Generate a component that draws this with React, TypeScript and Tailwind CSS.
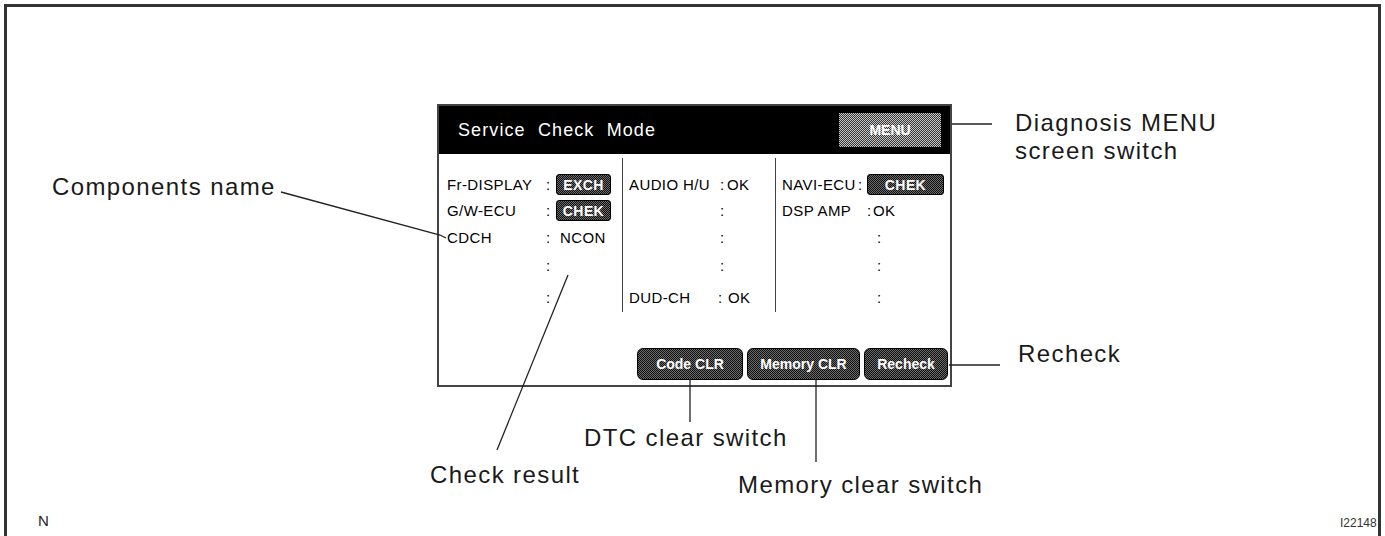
const dark =
  "bg-[repeating-conic-gradient(#111_0_25%,#6a6a6a_0_50%)] bg-[length:2px_2px]";
const light =
  "bg-[repeating-conic-gradient(#333_0_25%,#c8c8c8_0_50%)] bg-[length:2px_2px]";

type Row = { name?: string; colon: number; value?: string; boxed?: number; valueLeft?: number };

// offsets are measured from the column's inner left edge
const col1: Row[] = [
  { name: "Fr-DISPLAY", colon: 99, value: "EXCH", boxed: 55, valueLeft: 109 },
  { name: "G/W-ECU", colon: 99, value: "CHEK", boxed: 55, valueLeft: 109 },
  { name: "CDCH", colon: 99, value: "NCON", valueLeft: 113 },
  { colon: 99 },
  { colon: 99 },
];
const col2: Row[] = [
  { name: "AUDIO H/U", colon: 91, value: "OK", valueLeft: 98 },
  { colon: 91 },
  { colon: 91 },
  { colon: 91 },
  { name: "DUD-CH", colon: 89, value: "OK", valueLeft: 99 },
];
const col3: Row[] = [
  { name: "NAVI-ECU", colon: 76, value: "CHEK", boxed: 77, valueLeft: 85 },
  { name: "DSP AMP", colon: 85, value: "OK", valueLeft: 91 },
  { colon: 95 },
  { colon: 95 },
  { colon: 95 },
];

const rowHeights = [26, 27, 28, 32, 26];

function Column({ rows, pad, width, divider }: { rows: Row[]; pad: number; width: number; divider?: boolean }) {
  return (
    <div
      className={"flex flex-col pt-[14px] h-[154px] " + (divider ? "border-l-[1.5px] border-[#444]" : "")}
      style={{ width, paddingLeft: pad }}
    >
      {rows.map((r, i) => (
        <div
          key={i}
          className="relative text-[15px] tracking-[0.4px] text-black"
          style={{ height: rowHeights[i], lineHeight: "26px" }}
        >
          {r.name && <span className="absolute left-0 top-0">{r.name}</span>}
          <span className="absolute top-0" style={{ left: r.colon }}>:</span>
          {r.value &&
            (r.boxed ? (
              <span
                className={
                  "absolute top-[2px] h-[21px] flex items-center justify-center rounded-[3px] border border-black text-white font-bold text-[14px] leading-none " +
                  dark
                }
                style={{ left: r.valueLeft, width: r.boxed }}
              >
                {r.value}
              </span>
            ) : (
              <span className="absolute top-0" style={{ left: r.valueLeft }}>
                {r.value}
              </span>
            ))}
        </div>
      ))}
    </div>
  );
}

function Btn({ label, w }: { label: string; w: number }) {
  return (
    <div
      className={
        "h-[32px] flex items-center justify-center rounded-[6px] border border-black text-white font-bold text-[14px] " +
        dark
      }
      style={{ width: w }}
    >
      {label}
    </div>
  );
}

function Label({ text, left, top }: { text: string; left: number; top: number }) {
  return (
    <div
      className="absolute text-[24px] tracking-[1.4px] leading-[28px] text-[#1a1a1a] whitespace-nowrap"
      style={{ left, top }}
    >
      {text}
    </div>
  );
}

export default function App() {
  return (
    <div
      className="relative w-[1385px] h-[536px] bg-white overflow-hidden"
      style={{ fontFamily: '"Liberation Sans", Arial, sans-serif' }}
    >
      {/* outer figure frame */}
      <div className="absolute left-[4px] top-[4px] right-[4px] h-[560px] border-[3px] border-[#333]" />

      {/* the screen */}
      <div className="absolute left-[437px] top-[104px] w-[515px] h-[283px] border-2 border-[#444] bg-white flex flex-col">
        <div className="h-[48px] bg-black flex items-center justify-between pl-[19px] pr-[9px]">
          <span className="text-white text-[18px] tracking-[1.1px]">Service&nbsp; Check&nbsp; Mode</span>
          <div
            className={
              "w-[102px] h-[34px] flex items-center justify-center text-white font-bold text-[14px] " + light
            }
          >
            MENU
          </div>
        </div>
        <div className="flex mt-[4px]">
          <Column rows={col1} pad={8} width={183} />
          <Column rows={col2} pad={6} width={153} divider />
          <Column rows={col3} pad={6} width={175} divider />
        </div>
        <div className="flex-1" />
        <div className="flex justify-end gap-[4px] pr-[2px] pb-[5px]">
          <Btn label="Code CLR" w={106} />
          <Btn label="Memory CLR" w={113} />
          <Btn label="Recheck" w={84} />
        </div>
      </div>

      {/* leader lines */}
      <svg className="absolute inset-0 pointer-events-none" width="1385" height="536">
        <g stroke="#222" strokeWidth="1.3" fill="none">
          <line x1="952" y1="124" x2="992" y2="124" />
          <polyline points="281,192 440,235 446,238" />
          <line x1="568" y1="275" x2="497" y2="450" />
          <line x1="690" y1="379" x2="690" y2="422" />
          <line x1="816" y1="379" x2="816" y2="462" />
          <line x1="949" y1="365" x2="1000" y2="365" />
        </g>
      </svg>

      <Label text="Components name" left={52} top={173} />
      <Label text="Diagnosis MENU" left={1015} top={109} />
      <Label text="screen switch" left={1015} top={137} />
      <Label text="Recheck" left={1018} top={340} />
      <Label text="DTC clear switch" left={584} top={424} />
      <Label text="Check result" left={430} top={461} />
      <Label text="Memory clear switch" left={738} top={471} />

      <div className="absolute left-[38px] top-[511px] text-[15px] leading-[20px] text-[#222]">N</div>
      <div className="absolute left-[1340px] top-[514px] text-[12px] leading-[18px] text-[#333]">I22148</div>
    </div>
  );
}
